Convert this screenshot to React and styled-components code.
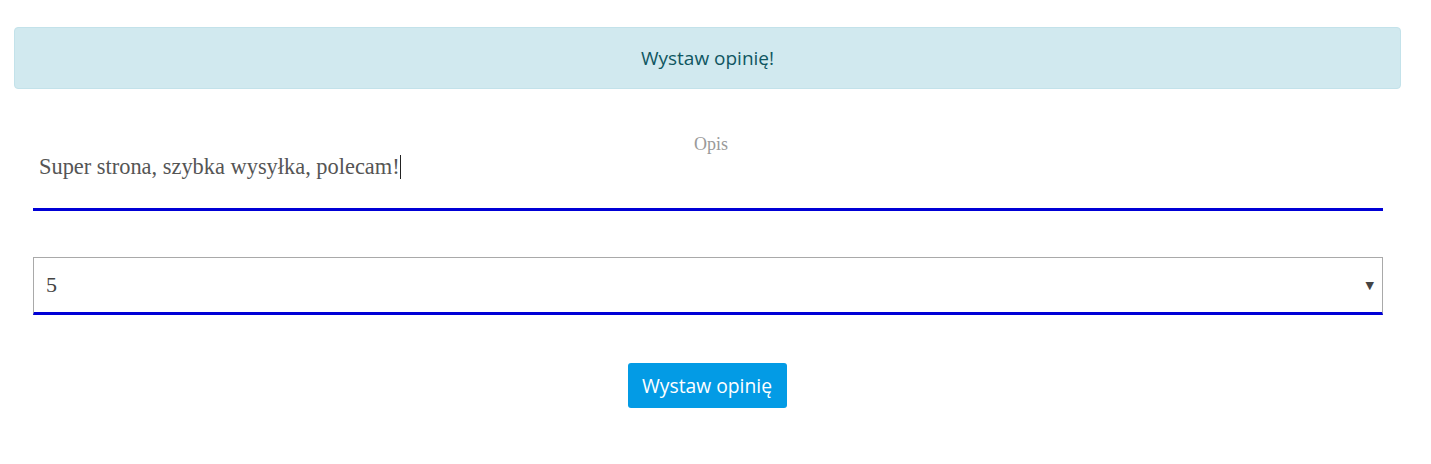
import React from "react";
import styled, { createGlobalStyle } from "styled-components";

const Global = createGlobalStyle`
  html, body { margin: 0; padding: 0; background: #fff; }
  * { box-sizing: border-box; }
`;

const Page = styled.div`
  width: 1431px;
  padding: 27px 30px 40px 14px;
`;

const Alert = styled.div`
  height: 62px;
  display: flex;
  align-items: center;
  justify-content: center;
  background: #d1e9ef;
  border: 1px solid #c3e2ea;
  border-radius: 4px;
  color: #0f5661;
  font-family: "Open Sans", "Noto Sans", sans-serif;
  font-size: 19px;
  padding-bottom: 1px;
`;

const Form = styled.form`
  margin: 0 18px 0 19px;
  display: flex;
  flex-direction: column;
`;

const Field = styled.div`
  margin-top: 43px;
  display: flex;
  flex-direction: column;
  border-bottom: 3px solid #0000d6;
  height: 79px;
`;

const Label = styled.label`
  text-align: center;
  font-family: "Liberation Serif", serif;
  font-size: 18px;
  color: #9a9a9a;
  line-height: 20px;
  padding: 2px 0 0 6px;
`;

const TextInput = styled.div`
  padding: 0 6px;
  font-family: "Liberation Serif", serif;
  font-size: 22.4px;
  color: #555;
  line-height: 26px;
`;

const Caret = styled.span`
  display: inline-block;
  width: 1px;
  height: 24px;
  background: #222;
  vertical-align: -5px;
`;

const SelectBox = styled.div`
  margin-top: 46px;
  height: 58px;
  border: 1px solid #a9a9a9;
  border-bottom: 3px solid #0000d6;
  display: flex;
  align-items: center;
  justify-content: space-between;
  padding: 0 8px 0 12px;
`;

const SelectValue = styled.span`
  font-family: "Liberation Serif", serif;
  font-size: 22px;
  color: #444;
`;

const Arrow = styled.span`
  font-family: "DejaVu Sans", sans-serif;
  font-size: 11px;
  color: #444;
`;

const ButtonRow = styled.div`
  display: flex;
  justify-content: center;
  margin-top: 48px;
`;

const Button = styled.button`
  width: 159px;
  height: 45px;
  border: none;
  border-radius: 3px;
  background: #039be5;
  color: #fff;
  font-family: "Open Sans", "Noto Sans", sans-serif;
  font-size: 19.3px;
  font-weight: 500;
  padding: 0;
  margin-right: 2px;
`;

export default function App() {
  return (
    <>
      <Global />
      <Page>
        <Alert>Wystaw opinię!</Alert>
        <Form>
          <Field>
            <Label>Opis</Label>
            <TextInput>
              Super strona, szybka wysyłka, polecam!<Caret />
            </TextInput>
          </Field>
          <SelectBox>
            <SelectValue>5</SelectValue>
            <Arrow>▼</Arrow>
          </SelectBox>
          <ButtonRow>
            <Button type="button">Wystaw opinię</Button>
          </ButtonRow>
        </Form>
      </Page>
    </>
  );
}
